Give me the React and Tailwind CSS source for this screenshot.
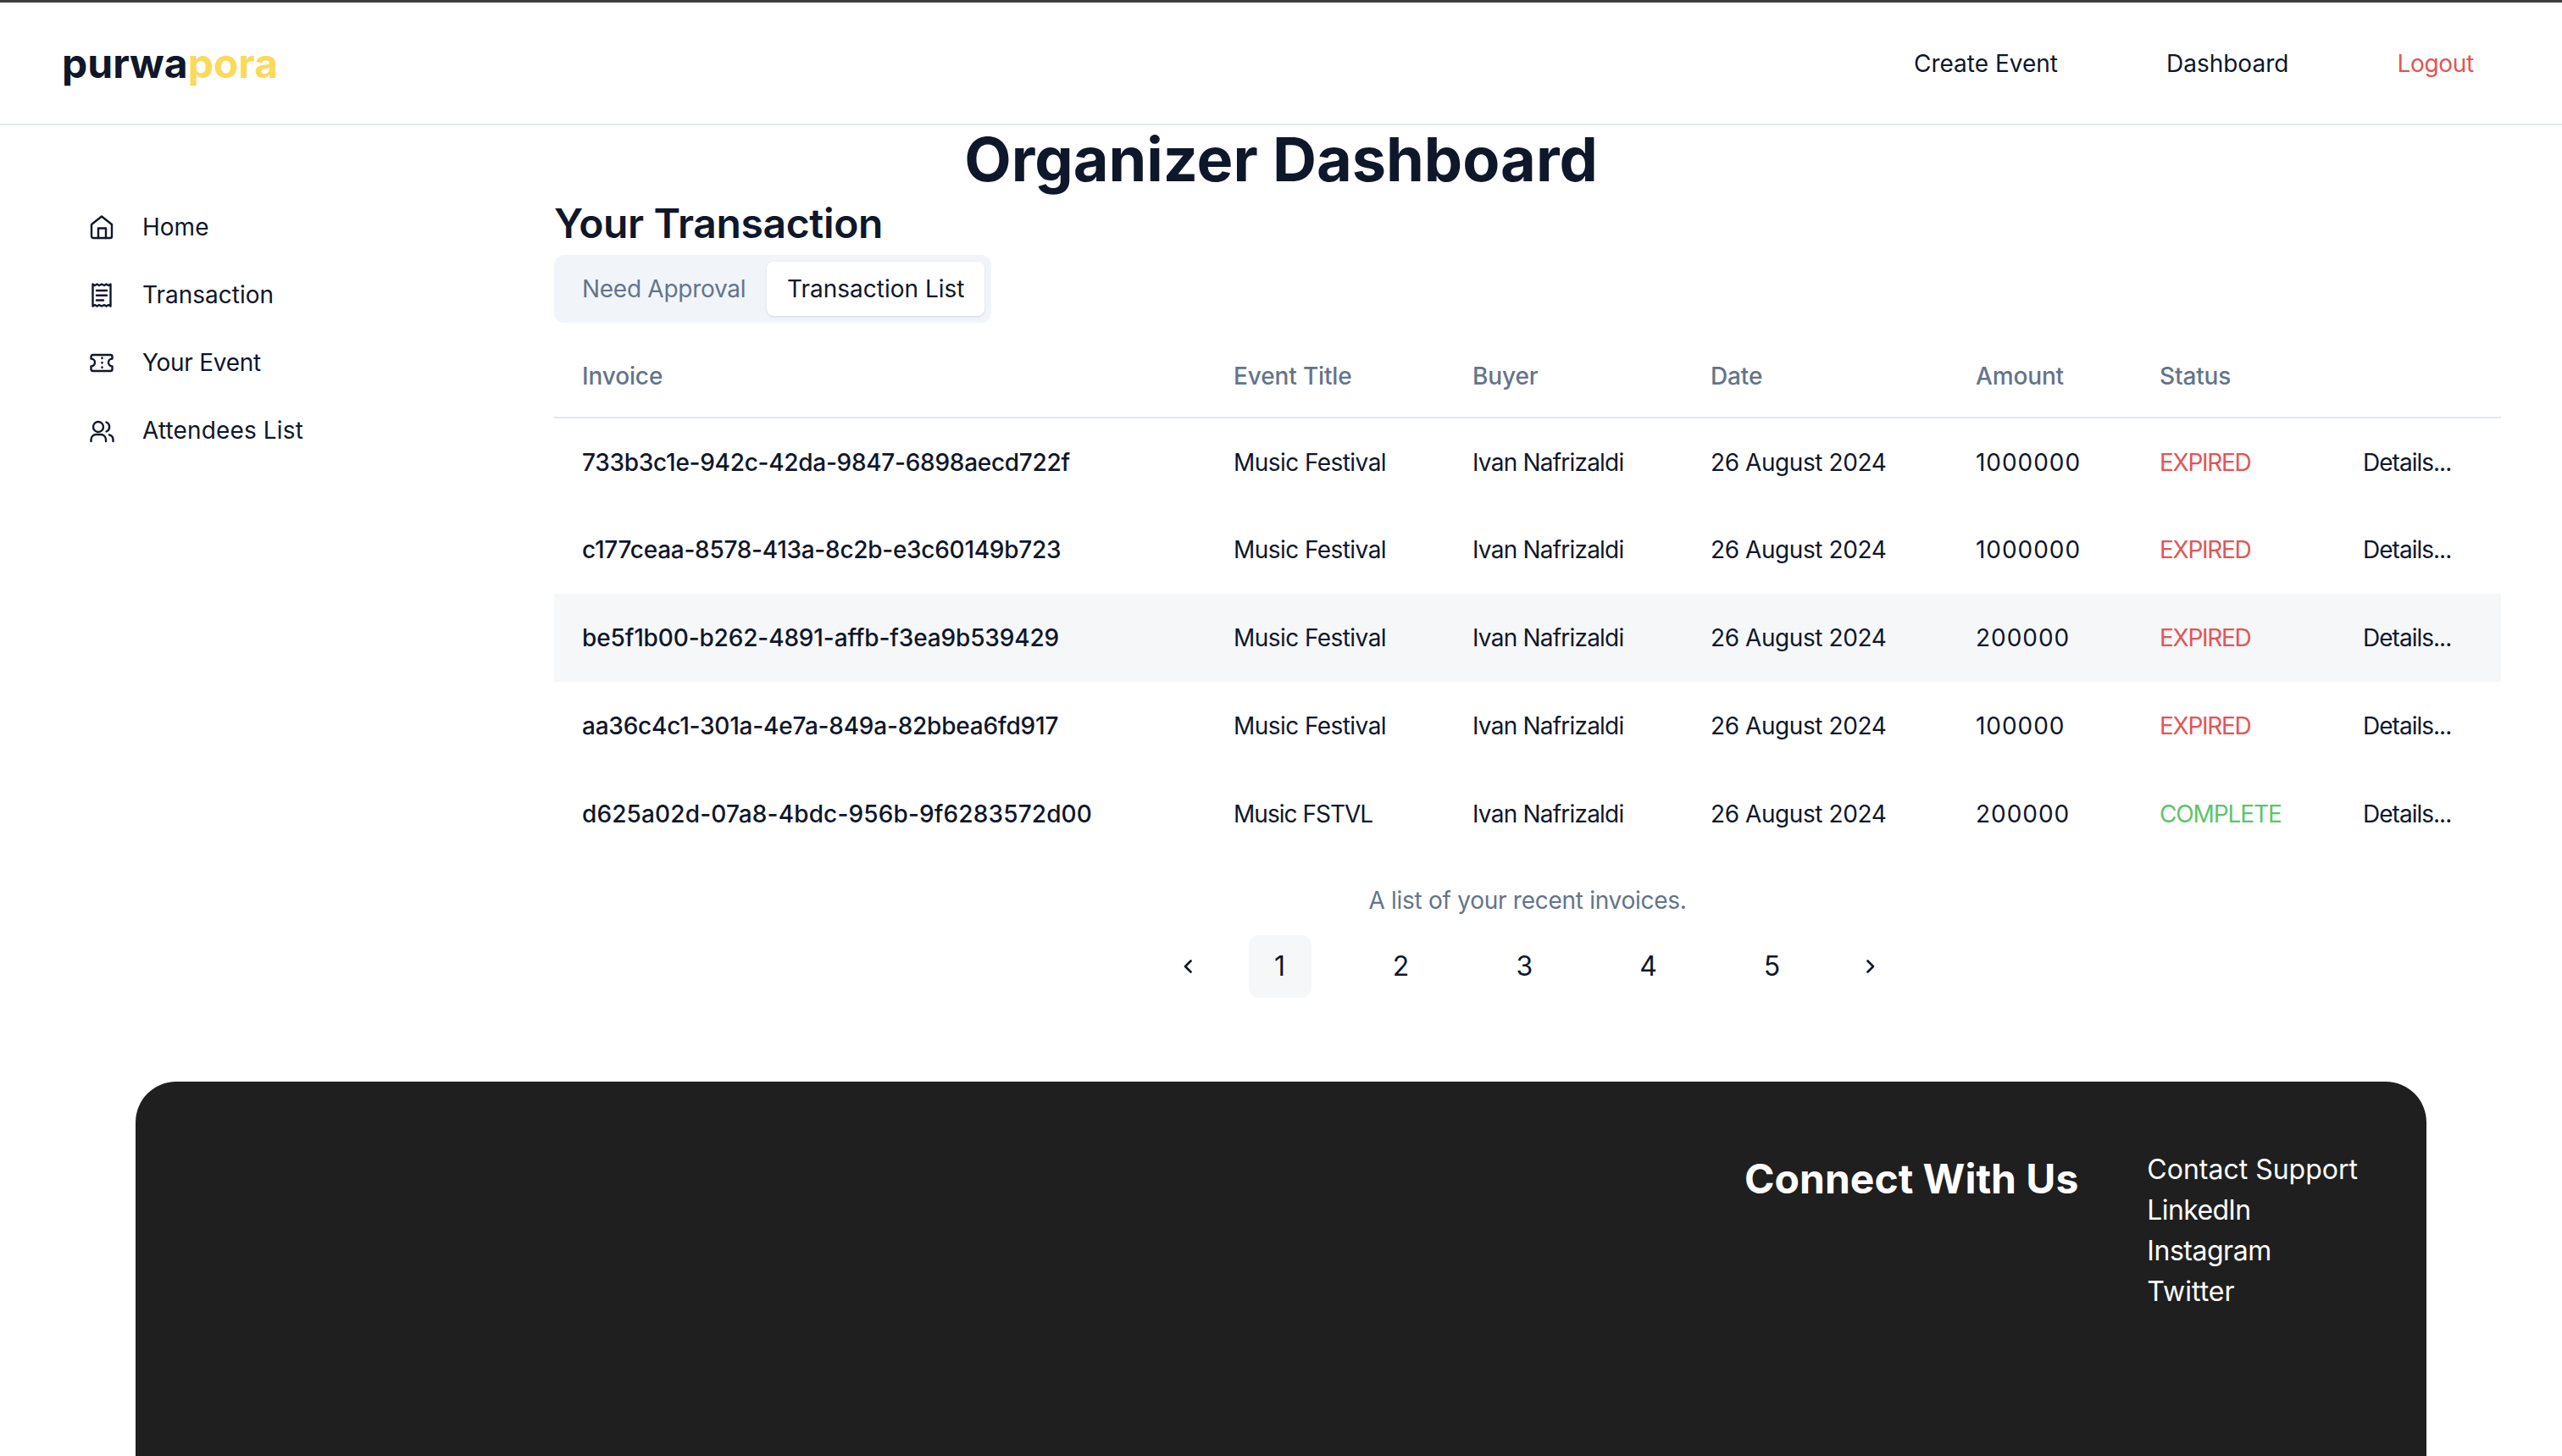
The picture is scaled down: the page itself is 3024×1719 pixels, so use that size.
const rows = [
  ["733b3c1e-942c-42da-9847-6898aecd722f", "Music Festival", "1000000", "EXPIRED", "tracking-[-0.01em]", "tracking-[-0.02em]"],
  ["c177ceaa-8578-413a-8c2b-e3c60149b723", "Music Festival", "1000000", "EXPIRED", "tracking-[-0.01em]", "tracking-[-0.02em]"],
  ["be5f1b00-b262-4891-affb-f3ea9b539429", "Music Festival", "200000", "EXPIRED", "tracking-[-0.005em]", "tracking-[-0.02em]"],
  ["aa36c4c1-301a-4e7a-849a-82bbea6fd917", "Music Festival", "100000", "EXPIRED", "tracking-[-0.008em]", "tracking-[-0.02em]"],
  ["d625a02d-07a8-4bdc-956b-9f6283572d00", "Music FSTVL", "200000", "COMPLETE", "tracking-[0.005em]", "tracking-[-0.035em]"],
];

const Icon = ({ children }) => (
  <svg width="32" height="32" viewBox="0 0 32 32" fill="none" stroke="#0f172a" strokeWidth="2.4" strokeLinecap="round" strokeLinejoin="round">
    {children}
  </svg>
);

const nav = [
  ["Home", "", <Icon><path d="M4 13 16 3.500 28 13v14a2 2 0 0 1-2 2H6a2 2 0 0 1-2-2Z" /><path d="M12 29V17.500h9V29" /></Icon>],
  ["Transaction", "", <Icon><path d="M5.500 3.500 8 5l2.500-1.500L13 5l3-1.500L19 5l2.500-1.500L24 5l2.500-1.500v26L24 28l-2.500 1.500L19 28l-3 1.500L13 28l-2.500 1.500L8 28l-2.500 1.500Z" /><path d="M10 11h12M10 16.700h12M10 22.500h8" /></Icon>],
  ["Your Event", "tracking-[-0.01em]", <Icon><path d="M3.500 9a2 2 0 0 1 2-2h21a2 2 0 0 1 2 2v2.500a4.500 4.500 0 0 0 0 9V24a2 2 0 0 1-2 2h-21a2 2 0 0 1-2-2v-3.500a4.500 4.500 0 0 0 0-9Z" /><path d="M16.500 10.500v.5M16.500 16v.5M16.500 21.500v.5" /></Icon>],
  ["Attendees List", "tracking-[0.005em]", <Icon><circle cx="12" cy="12" r="6" /><path d="M3.500 29v-2a6 6 0 0 1 6-6h5.500a6 6 0 0 1 6 6v2" /><path d="M21.500 6.500a6 6 0 0 1 0 11M25 21.300a6 6 0 0 1 4.500 5.700v2" /></Icon>],
];

const Chevron = ({ d, className }) => (
  <svg className={className} width="12" height="16" viewBox="0 0 12 16" fill="none" stroke="#0f172a" strokeWidth="2.6" strokeLinecap="round" strokeLinejoin="round">
    <path d={d} />
  </svg>
);

export default function App() {
  return (
    <div className="h-[1719px] overflow-hidden bg-white text-[#0f172a] font-['Inter','Liberation_Sans',sans-serif] text-[28px]">
      <header className="h-[148px] border-t-[3px] border-t-[#3f3f3f] border-b-2 border-b-[#e2e8f0] flex items-center pl-[73px] pr-[104px]">
        <div className="text-[48px] font-bold">purwa<span className="text-[#fcd95a]">pora</span></div>
        <nav className="ml-auto flex gap-[128px]">
          <a>Create Event</a>
          <a>Dashboard</a>
          <a className="text-[#e25555] tracking-[-0.01em]">Logout</a>
        </nav>
      </header>

      <h1 className="h-[80px] leading-[80px] text-center text-[72px] font-bold">Organizer Dashboard</h1>

      <div className="flex">
        <aside className="w-[654px] shrink-0">
          <ul className="flex flex-col gap-[40px] pl-[104px] pt-[20px]">
            {nav.map(([label, tracking, icon]) => (
              <li key={label} className="flex items-center gap-[32px] h-[40px]">
                {icon}
                <span className={tracking}>{label}</span>
              </li>
            ))}
          </ul>
        </aside>

        <main className="flex-1 pr-[72px]">
          <h2 className="h-[73px] leading-[72px] text-[48px] font-semibold tracking-[-0.0075em]">Your Transaction</h2>
          <div className="w-[516px] h-[80px] rounded-[12px] bg-[#f1f5f9] p-[8px] flex text-[#64748b]">
            <div className="w-[243px] flex items-center pl-[25px] tracking-[-0.01em]">Need Approval</div>
            <div className="flex-1 rounded-[8px] bg-white shadow-sm text-[#0f172a] flex items-center pl-[24px]">Transaction List</div>
          </div>

          <table className="mt-[15px] w-full table-fixed border-collapse">
            <thead>
              <tr className="h-[97px] border-b-2 border-[#e2e8f0] text-[#64748b] text-left tracking-[-0.005em]">
                <th className="w-[770px] pl-[33px] font-medium">Invoice</th>
                <th className="w-[282px] pl-[32px] font-medium">Event Title</th>
                <th className="w-[282px] pl-[32px] font-medium">Buyer</th>
                <th className="w-[312px] pl-[31px] font-medium">Date</th>
                <th className="w-[217px] pl-[32px] font-medium">Amount</th>
                <th className="w-[240px] pl-[32px] font-medium">Status</th>
                <th></th>
              </tr>
            </thead>
            <tbody>
              {rows.map((r, i) => (
                <tr key={r[0]} className={i === 2 ? "h-[104px] bg-[#f6f7f9]" : "h-[104px]"}>
                  <td className={`pl-[33px] font-medium ${r[4]}`}>{r[0]}</td>
                  <td className={`pl-[32px] ${r[5]}`}>{r[1]}</td>
                  <td className="pl-[32px] tracking-[-0.028em]">Ivan Nafrizaldi</td>
                  <td className="pl-[31px] tracking-[-0.015em]">26 August 2024</td>
                  <td className="pl-[32px] tracking-[0.034em]">{r[2]}</td>
                  <td className={r[3] === "EXPIRED" ? "pl-[32px] text-[#e25555] tracking-[-0.045em]" : "pl-[32px] text-[#5cc46a] tracking-[-0.04em]"}>{r[3]}</td>
                  <td className="pl-[32px] tracking-[-0.035em]">Details...</td>
                </tr>
              ))}
            </tbody>
          </table>

          <p className="mt-[30px] h-[40px] leading-[41px] text-center text-[#64748b] tracking-[-0.01em]">A list of your recent invoices.</p>

          <div className="mt-[21px] pl-[3px] flex items-center justify-center gap-[66px] text-[32px]">
            <Chevron d="M9.500 1.500 3 8 9.500 14.500" />
            <div className="w-[74px] h-[74px] rounded-[12px] bg-[#f6f7f9] flex items-center justify-center">1</div>
            {[2, 3, 4, 5].map((n) => (
              <div key={n} className="w-[80px] h-[74px] flex items-center justify-center">{n}</div>
            ))}
            <Chevron className="ml-[4px]" d="M2.500 1.500 9 8 2.500 14.500" />
          </div>
        </main>
      </div>

      <footer className="mt-[99px] mx-[160px] h-[900px] rounded-t-[48px] bg-[#1f1f1f] text-white flex justify-end pt-[80px] pr-[81px] gap-[81px]">
        <h3 className="h-[70px] leading-[70px] text-[48px] font-bold">Connect With Us</h3>
        <ul className="text-[32px] leading-[48px]">
          <li>Contact Support</li>
          <li className="tracking-[-0.02em]">LinkedIn</li>
          <li className="tracking-[-0.015em]">Instagram</li>
          <li>Twitter</li>
        </ul>
      </footer>
    </div>
  );
}
